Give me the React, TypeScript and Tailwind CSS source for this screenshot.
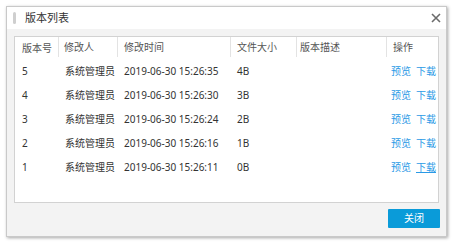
import React from "react";

type Version = {
  no: number;
  user: string;
  time: string;
  size: string;
  desc: string;
};

const versions: Version[] = [
  { no: 5, user: "系统管理员", time: "2019-06-30 15:26:35", size: "4B", desc: "" },
  { no: 4, user: "系统管理员", time: "2019-06-30 15:26:30", size: "3B", desc: "" },
  { no: 3, user: "系统管理员", time: "2019-06-30 15:26:24", size: "2B", desc: "" },
  { no: 2, user: "系统管理员", time: "2019-06-30 15:26:16", size: "1B", desc: "" },
  { no: 1, user: "系统管理员", time: "2019-06-30 15:26:11", size: "0B", desc: "" },
];

const cols = "grid grid-cols-[43px_59px_113px_66px_90px_1fr]";

export default function App() {
  return (
    <div
      className="w-[454px] h-[243px] bg-white pt-[6px] pl-[6px]"
      style={{ fontFamily: '"Noto Sans", "Noto Sans CJK SC", sans-serif' }}
    >
      <div className="w-[441px] h-[231px] flex flex-col border border-[#c9c9c9] shadow-[1px_1px_3px_rgba(0,0,0,0.35)]">
        {/* 标题栏 */}
        <div className="h-[22px] bg-white flex items-center pl-[6px] pr-[5px]">
          <span className="w-[3px] h-[12px] rounded-full bg-[#cfcfcf]" />
          <span className="ml-[9px] text-[11px] text-[#333]">版本列表</span>
          <svg className="ml-auto" width="10" height="10" viewBox="0 0 10 10">
            <path d="M1 1 L9 9 M9 1 L1 9" stroke="#6b6b6b" strokeWidth="1.6" />
          </svg>
        </div>

        {/* 内容 */}
        <div className="flex-1 bg-[#f3f3f3] pt-[7px] pl-[7px] pr-[7px] flex flex-col">
          <div className="h-[167px] bg-white border border-[#d2d2d2] text-[10px] text-[#333]">
            <div className={`${cols} h-[22px] text-[#555]`}>
              <div className="pl-[7px] flex items-center">版本号</div>
              <div className="pl-[5px] flex items-center border-l border-[#e3e3e3] mb-[2px]">修改人</div>
              <div className="pl-[6px] flex items-center border-l border-[#e3e3e3] mb-[2px]">修改时间</div>
              <div className="pl-[6px] flex items-center border-l border-[#e3e3e3] mb-[2px]">文件大小</div>
              <div className="pl-[3px] flex items-center border-l border-[#e3e3e3] mb-[2px]">版本描述</div>
              <div className="pl-[6px] flex items-center border-l border-[#e3e3e3] mb-[2px]">操作</div>
            </div>
            {versions.map((v, i) => (
              <div key={v.no} className={`${cols} h-[24px] items-center`}>
                <div className="pl-[7px]">{v.no}</div>
                <div className="pl-[7px]">{v.user}</div>
                <div className="pl-[7px]">{v.time}</div>
                <div className="pl-[7px]">{v.size}</div>
                <div className="pl-[4px]">{v.desc}</div>
                <div className="pl-[5px] flex gap-[5px] text-[#2a9ae6]">
                  <span>预览</span>
                  <span className={i === versions.length - 1 ? "underline" : ""}>下载</span>
                </div>
              </div>
            ))}
          </div>
          <div className="mt-[6px] flex justify-end -mr-px">
            <button className="w-[52px] h-[19px] bg-[#0a9bd9] text-white text-[10px] rounded-[1px]">
              关闭
            </button>
          </div>
        </div>
      </div>
    </div>
  );
}
